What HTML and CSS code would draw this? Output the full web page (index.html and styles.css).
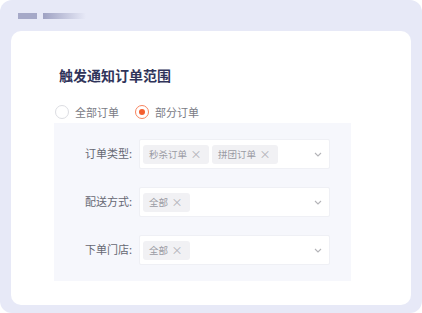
FILE: index.html
```html
<!DOCTYPE html>
<html lang="zh-CN">
  <head>
    <meta charset="UTF-8" />
    <meta name="viewport" content="width=device-width, initial-scale=1.0" />
    <title>触发通知订单范围</title>
    <link rel="stylesheet" href="styles.css">
  </head>
  <body>
    <div class="frame">
      <div class="frame-bars">
        <span class="bar"></span>
        <span class="bar bar-fade"></span>
      </div>

      <div class="card">
        <h2 class="card-title">触发通知订单范围</h2>

        <div class="radio-group">
          <label class="radio">
            <span class="radio-dot"></span>
            <span class="radio-text">全部订单</span>
          </label>
          <label class="radio checked">
            <span class="radio-dot"></span>
            <span class="radio-text">部分订单</span>
          </label>
        </div>

        <div class="scope-panel">
          <div class="form-row">
            <span class="form-label">订单类型:</span>
            <div class="select">
              <span class="tag">秒杀订单<i class="tag-close">×</i></span>
              <span class="tag">拼团订单<i class="tag-close">×</i></span>
              <svg class="arrow" width="8" height="5" viewBox="0 0 8 5">
                <path d="M1 1 L4 4 L7 1" fill="none" stroke="#b4b4b8" stroke-width="1.1" />
              </svg>
            </div>
          </div>

          <div class="form-row">
            <span class="form-label">配送方式:</span>
            <div class="select">
              <span class="tag">全部<i class="tag-close">×</i></span>
              <svg class="arrow" width="8" height="5" viewBox="0 0 8 5">
                <path d="M1 1 L4 4 L7 1" fill="none" stroke="#b4b4b8" stroke-width="1.1" />
              </svg>
            </div>
          </div>

          <div class="form-row">
            <span class="form-label">下单门店:</span>
            <div class="select">
              <span class="tag">全部<i class="tag-close">×</i></span>
              <svg class="arrow" width="8" height="5" viewBox="0 0 8 5">
                <path d="M1 1 L4 4 L7 1" fill="none" stroke="#b4b4b8" stroke-width="1.1" />
              </svg>
            </div>
          </div>
        </div>
      </div>
    </div>
  </body>
</html>
```

FILE: styles.css
```css
* {
  box-sizing: border-box;
}

body {
  margin: 0;
  background: #fff;
  font-family: "Noto Sans CJK SC", "Noto Sans", sans-serif;
}

.frame {
  width: 422px;
  height: 313px;
  background: #e7e9f7;
  border-radius: 12px;
  padding: 13px 11px 8px;
}

.frame-bars {
  display: flex;
  gap: 6px;
  height: 6px;
  padding-left: 7px;
}

.bar {
  width: 19px;
  height: 6px;
  background: #a6a9c8;
}

.bar-fade {
  width: 43px;
  background: linear-gradient(to right, #9fa2c3, rgba(159, 162, 195, 0));
}

.card {
  margin-top: 12px;
  width: 400px;
  height: 274px;
  background: #fff;
  border-radius: 10px;
  padding: 34px 0 0 43px;
}

.card-title {
  margin: 0 0 0 5px;
  font-size: 14px;
  line-height: 20px;
  font-weight: 600;
  color: #30345a;
}

.radio-group {
  display: flex;
  gap: 16px;
  margin: 20px 0 0 1px;
  height: 14px;
  align-items: center;
}

.radio {
  display: flex;
  align-items: center;
  gap: 6px;
  font-size: 11px;
  line-height: 14px;
  color: #7a7b85;
}

.radio-dot {
  width: 14px;
  height: 14px;
  border-radius: 50%;
  border: 1px solid #dcdde2;
  background: #fff;
  display: flex;
  align-items: center;
  justify-content: center;
}

.radio.checked .radio-dot {
  border-color: #f7845e;
}

.radio.checked .radio-dot::after {
  content: "";
  width: 6px;
  height: 6px;
  border-radius: 50%;
  background: #f45f2f;
}

.scope-panel {
  margin-top: 4px;
  width: 297px;
  background: #f6f7fc;
  padding: 16px 0;
  display: flex;
  flex-direction: column;
  gap: 18px;
}

.form-row {
  display: flex;
  align-items: center;
  gap: 7px;
}

.form-label {
  width: 78px;
  text-align: right;
  font-size: 11px;
  line-height: 14px;
  margin-top: -2px;
  color: #666873;
}

.select {
  width: 191px;
  height: 30px;
  background: #fff;
  border: 1px solid #eff0f5;
  border-radius: 2px;
  display: flex;
  align-items: center;
  gap: 3px;
  padding: 0 0 0 3px;
  position: relative;
}

.tag {
  display: flex;
  align-items: center;
  height: 19px;
  padding: 0 7px 0 6px;
  background: #f1f1f4;
  border-radius: 3px;
  font-size: 9.5px;
  color: #9a9ba3;
}

.tag-close {
  font-style: normal;
  font-size: 11px;
  width: 12px;
  text-align: center;
  margin-left: 3px;
  color: #aeafb5;
}

.arrow {
  position: absolute;
  right: 7px;
  top: 12px;
}
```
